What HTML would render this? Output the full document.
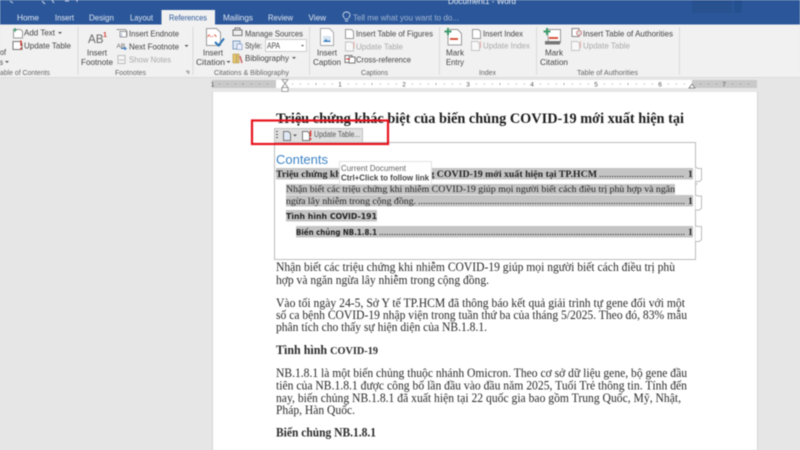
<!DOCTYPE html>
<html lang="vi">
<head>
<meta charset="utf-8">
<title>Document1 - Word</title>
<style>
html,body{margin:0;padding:0;width:800px;height:450px;overflow:hidden;background:#e6e6e6}
svg{display:block;position:absolute;left:0;top:0;filter:blur(.4px)}
.r{font-family:"Liberation Sans",sans-serif;font-size:8.6px;fill:#444}
.g{fill:#a9a9a9}
.l{font-size:7.6px;fill:#666;text-anchor:middle}
.t{font-family:"Liberation Sans",sans-serif;font-size:8.6px;fill:#fff;opacity:.85}
.b{font-family:"Liberation Serif",serif;font-size:12.3px;fill:#2a2a2a}
.bb{font-weight:bold}
.toc{font-family:"Liberation Serif",serif;font-size:9.5px;fill:#222}
.s{font-family:"DejaVu Sans",sans-serif;font-size:8px;font-weight:bold;fill:#222}
.i{fill:none;stroke:#777;stroke-width:1}
.n{font-family:"Liberation Sans",sans-serif;font-size:6.5px;fill:#555;text-anchor:middle}
</style>
</head>
<body>
<svg width="800" height="450" viewBox="0 0 800 450" xmlns="http://www.w3.org/2000/svg">
<rect width="800" height="450" fill="#e6e6e6"/>
<!-- title bar -->
<rect width="800" height="24.500" fill="#2b579a"/>
<rect x="692" y="0" width="40" height="13" fill="#28528f"/>
<rect x="734" y="0" width="8" height="13" fill="#25508f"/>
<text class="t" x="448" y="4" textLength="68" lengthAdjust="spacingAndGlyphs" style="opacity:.9">Document1 - Word</text>
<path d="M10 1l3 2M42 1l3 3M52 0l2 3M65 1l4 0M77 0l0 2" stroke="#cfd9ea" stroke-width="1" fill="none"/>
<!-- tabs -->
<rect x="161.500" y="10" width="53.500" height="15" fill="#f1f1f1"/>
<text class="t" x="17" y="20.500" textLength="22" lengthAdjust="spacingAndGlyphs">Home</text>
<text class="t" x="55" y="20.500" textLength="19" lengthAdjust="spacingAndGlyphs">Insert</text>
<text class="t" x="89" y="20.500" textLength="25" lengthAdjust="spacingAndGlyphs">Design</text>
<text class="t" x="130" y="20.500" textLength="23" lengthAdjust="spacingAndGlyphs">Layout</text>
<text class="r" x="169" y="20.500" textLength="38" lengthAdjust="spacingAndGlyphs" style="fill:#2b579a">References</text>
<text class="t" x="223" y="20.500" textLength="30" lengthAdjust="spacingAndGlyphs">Mailings</text>
<text class="t" x="268" y="20.500" textLength="25" lengthAdjust="spacingAndGlyphs">Review</text>
<text class="t" x="308.500" y="20.500" textLength="17.500" lengthAdjust="spacingAndGlyphs">View</text>
<path d="M345 21h3M344.500 19h4M344.500 18c-3-3-1-6 2-6s5 3 2 6" fill="none" stroke="#c9d5e8" stroke-width=".9"/>
<text class="t" x="353" y="20.500" textLength="106" lengthAdjust="spacingAndGlyphs" style="opacity:.55">Tell me what you want to do...</text>
<!-- ribbon -->
<rect y="24.500" width="800" height="53" fill="#f1f1f1"/>
<rect y="77" width="800" height="1" fill="#dcdcdc"/>
<g stroke="#dadada" stroke-width="1">
<path d="M78 27v48M193 27v48M309.500 27v48M439.500 27v48M536.500 27v48M679.500 27v48"/>
</g>
<!-- group labels -->
<g>
<text class="r l" x="25" y="75" textLength="50" lengthAdjust="spacingAndGlyphs">able of Contents</text>
<text class="r l" x="130.500" y="75" textLength="31" lengthAdjust="spacingAndGlyphs">Footnotes</text>
<text class="r l" x="251.500" y="75" textLength="75" lengthAdjust="spacingAndGlyphs">Citations &amp; Bibliography</text>
<text class="r l" x="374.500" y="75" textLength="27" lengthAdjust="spacingAndGlyphs">Captions</text>
<text class="r l" x="487.500" y="75" textLength="17" lengthAdjust="spacingAndGlyphs">Index</text>
<text class="r l" x="607.500" y="75" textLength="61" lengthAdjust="spacingAndGlyphs">Table of Authorities</text>
</g>
<path d="M186 71h3v3M188.500 73.500l-2-2" stroke="#888" fill="none" stroke-width=".7"/>

<!-- TOC group -->
<path d="M13.500 29.500h7l2 2v6.500h-9z" fill="#fff" stroke="#999"/>
<path d="M15 28v4M13 30h4" stroke="#3d9a6a"/>
<text class="r" x="24" y="35.500" textLength="31" lengthAdjust="spacingAndGlyphs">Add Text</text>
<path d="M58 32l2 2 2-2z" fill="#555"/>
<path d="M13 41.500h7l2 2v6h-9z" fill="#fff" stroke="#777"/>
<path d="M21 40.500v5.500M21 47.500v2" stroke="#d8342a" stroke-width="1.400"/>
<text class="r" x="24" y="48.500" textLength="47" lengthAdjust="spacingAndGlyphs">Update Table</text>
<text class="r" x="0" y="55" textLength="6" lengthAdjust="spacingAndGlyphs">of</text>
<text class="r" x="0" y="65" textLength="3" lengthAdjust="spacingAndGlyphs">s</text>
<path d="M5 61l2 2 2-2z" fill="#555"/>

<!-- Footnotes group -->
<text x="88" y="43" font-family="Liberation Sans,sans-serif" font-size="11.500" fill="#666" textLength="15.500" lengthAdjust="spacingAndGlyphs">AB</text>
<text x="103" y="37" font-family="Liberation Sans,sans-serif" font-size="7" font-weight="bold" fill="#d0473a">1</text>
<text class="r" x="87" y="55.500" textLength="20" lengthAdjust="spacingAndGlyphs">Insert</text>
<text class="r" x="81" y="65" textLength="32" lengthAdjust="spacingAndGlyphs">Footnote</text>
<path d="M116.500 29.500h9l1.500 2v5" fill="#e8e8e8" stroke="#999"/>
<rect x="120" y="31.500" width="6.500" height="5.500" fill="#fff" stroke="#777" stroke-width=".7"/>
<text x="121" y="36.500" font-family="Liberation Sans,sans-serif" font-size="5" fill="#2b579a">i</text>
<text class="r" x="129" y="36.500" textLength="50" lengthAdjust="spacingAndGlyphs">Insert Endnote</text>
<text x="116.500" y="48" font-family="Liberation Sans,sans-serif" font-size="6.500" fill="#666">AB</text>
<path d="M121 48.500h5l-1.500-1.500M126 48.500l-1.500 1.500" stroke="#3f7fc0" fill="none"/>
<text class="r" x="129" y="49.500" textLength="50" lengthAdjust="spacingAndGlyphs">Next Footnote</text>
<path d="M184.500 45l2 2 2-2z" fill="#555"/>
<rect x="118" y="55.500" width="7" height="8" fill="#f5f5f5" stroke="#bbb"/>
<path d="M119 60h5" stroke="#bbb"/>
<text class="r g" x="129" y="62.500" textLength="42" lengthAdjust="spacingAndGlyphs">Show Notes</text>

<!-- Citation -->
<path d="M206.500 28.500h10l4 4v13h-14z" fill="#fff" stroke="#999"/>
<path d="M208 37c0-2 1-2 2-2M214 35c1 0 2 0 2 2" stroke="#d8543f" fill="none"/>
<path d="M210 36.500h3" stroke="#d8543f" stroke-dasharray="1 1"/>
<path d="M215 42l3.500 3.500 5.500-7" stroke="#2b74b5" stroke-width="2" fill="none"/>
<text class="r" x="203" y="55.500" textLength="20" lengthAdjust="spacingAndGlyphs">Insert</text>
<text class="r" x="196" y="65" textLength="29" lengthAdjust="spacingAndGlyphs">Citation</text>
<path d="M226.500 61l2 2 2-2z" fill="#555"/>
<rect x="233" y="30" width="9" height="5.500" fill="#eee" stroke="#777"/><path d="M235 30v-2h5v2" class="i"/>
<text class="r" x="245" y="36.500" textLength="58" lengthAdjust="spacingAndGlyphs">Manage Sources</text>
<rect x="233" y="41" width="7" height="8" fill="#dfe8f3" stroke="#7f9cc0"/><rect x="237" y="44" width="5" height="5.500" fill="#eef" stroke="#7f9cc0" stroke-width=".7"/>
<text class="r" x="245" y="48.500" textLength="17" lengthAdjust="spacingAndGlyphs">Style:</text>
<rect x="265.500" y="39.500" width="41" height="12" fill="#fff" stroke="#ccc"/>
<text class="r" x="267" y="48.500" textLength="13" lengthAdjust="spacingAndGlyphs">APA</text>
<path d="M301 45l1.500 1.500 1.500-1.500z" fill="#444"/>
<path d="M233 54h3v9h-3zM237 54h2v9h-2z" fill="#e8c76f" stroke="#a98d3c" stroke-width=".6"/><path d="M240 56l2 7" stroke="#c66" stroke-width="1.500"/>
<text class="r" x="245" y="61" textLength="44" lengthAdjust="spacingAndGlyphs">Bibliography</text>
<path d="M292 57l2 2 2-2z" fill="#555"/>

<!-- Caption -->
<path d="M320.500 28.500h9l4 4v13h-13z" fill="#fff" stroke="#aaa"/>
<rect x="323" y="36" width="8" height="6" fill="#d8e4f0"/>
<path d="M323 42l3-3 2 2 1-1 2 2z" fill="#3f7fc0"/>
<text class="r" x="317" y="55.500" textLength="20" lengthAdjust="spacingAndGlyphs">Insert</text>
<text class="r" x="313" y="65" textLength="28" lengthAdjust="spacingAndGlyphs">Caption</text>
<path d="M345.500 29.500h6l2 2v7h-8z" fill="#fff" stroke="#999"/>
<text class="r" x="356" y="36.500" textLength="77" lengthAdjust="spacingAndGlyphs">Insert Table of Figures</text>
<path d="M345.500 42h6l2 2v7h-8z" fill="#f8f8f8" stroke="#c4c4c4"/><path d="M354 41.500v7" stroke="#e8b0aa"/>
<text class="r g" x="356" y="49.500" textLength="47" lengthAdjust="spacingAndGlyphs">Update Table</text>
<rect x="345" y="55.500" width="7" height="7" fill="#fff" stroke="#777"/><rect x="349" y="57" width="6" height="6" fill="#fff" stroke="#777"/>
<path d="M346 59h4" stroke="#c33"/>
<text class="r" x="356" y="62.500" textLength="55" lengthAdjust="spacingAndGlyphs">Cross-reference</text>

<!-- Mark Entry -->
<path d="M449.500 29.500h8l4 4v11.500h-13.500v-11" fill="#fff" stroke="#999"/>
<path d="M448 28v7M444.500 31.500h7" stroke="#3d9a6a" stroke-width="2"/>
<path d="M450 39h8" stroke="#d8543f" stroke-width="2"/>
<text class="r" x="446" y="55.500" textLength="18" lengthAdjust="spacingAndGlyphs">Mark</text>
<text class="r" x="446" y="65" textLength="18" lengthAdjust="spacingAndGlyphs">Entry</text>
<path d="M472.500 29.500h6l2 2v7h-8z" fill="#fff" stroke="#999"/>
<text class="r" x="483" y="36.500" textLength="40" lengthAdjust="spacingAndGlyphs">Insert Index</text>
<path d="M471.500 41.500h6l2 2v7h-8z" fill="#f8f8f8" stroke="#c4c4c4"/><path d="M480.500 41v7" stroke="#e8b0aa"/>
<text class="r g" x="483" y="48.500" textLength="47" lengthAdjust="spacingAndGlyphs">Update Index</text>

<!-- Mark Citation -->
<path d="M547.500 29.500h13v13h-12z" fill="#fff" stroke="#999"/>
<rect x="545" y="41" width="15" height="3.500" fill="#777"/>
<path d="M547 28v7M543.500 31.500h7" stroke="#3d9a6a" stroke-width="2"/>
<path d="M549 38h9" stroke="#d8543f" stroke-width="2"/>
<text class="r" x="545" y="55.500" textLength="18" lengthAdjust="spacingAndGlyphs">Mark</text>
<text class="r" x="540" y="65" textLength="28" lengthAdjust="spacingAndGlyphs">Citation</text>
<rect x="572" y="28.500" width="7" height="8" fill="#fff" stroke="#888"/><circle cx="579" cy="33" r="2.500" fill="#ddd" stroke="#c66" stroke-width=".7"/>
<text class="r" x="583" y="36.500" textLength="90" lengthAdjust="spacingAndGlyphs">Insert Table of Authorities</text>
<path d="M571.500 41.500h6l2 2v7h-8z" fill="#f8f8f8" stroke="#c4c4c4"/><path d="M580.500 41v7" stroke="#e8b0aa"/>
<text class="r g" x="583" y="48.500" textLength="47" lengthAdjust="spacingAndGlyphs">Update Table</text>

<!-- ruler -->
<rect x="212" y="80" width="545" height="8" fill="#c9c9c9"/>
<rect x="276" y="80" width="416" height="8" fill="#fff"/>
<path d="M219 84h1M227 84h1M235 84h1M243 83v2M251 84h1M259 84h1M267 84h1" stroke="#888" stroke-width=".7"/>
<path d="M292 84h1M300 84h1M308 84h1M316 83v2M324 84h1M332 84h1M348 84h1M356 84h1M364 84h1M372 83v2M380 84h1M388 84h1M396 84h1M412 84h1M420 84h1M428 84h1M436 83v2M444 84h1M452 84h1M460 84h1M476 84h1M484 84h1M492 84h1M500 83v2M508 84h1M516 84h1M524 84h1M540 84h1M548 84h1M556 84h1M564 83v2M572 84h1M580 84h1M588 84h1M604 84h1M612 84h1M620 84h1M628 83v2M636 84h1M644 84h1M652 84h1M668 84h1M676 84h1M684 84h1M700 84h1M708 84h1M716 84h1M732 84h1M740 84h1M748 84h1" stroke="#888" stroke-width=".7"/>
<g><text class="n" x="212.500" y="86.500">1</text><text class="n" x="340" y="86.500">1</text><text class="n" x="404" y="86.500">2</text><text class="n" x="468" y="86.500">3</text><text class="n" x="532" y="86.500">4</text><text class="n" x="596" y="86.500">5</text><text class="n" x="660" y="86.500">6</text><text class="n" x="724" y="86.500">7</text></g>
<path d="M282 79.500h6l-3 4 3 4h-6l3-4zM282 87.500h6v4h-6z" fill="#fff" stroke="#888" stroke-width=".8"/>
<path d="M689 88l3-4 3 4z" fill="#fff" stroke="#777" stroke-width=".8"/>

<!-- page -->
<rect x="212.500" y="92" width="545" height="358" fill="#fff"/>
<path d="M212.500 92v358M757.500 92v358" stroke="#d5d5d5"/>

<!-- title text -->
<text class="b bb" x="276" y="123" style="font-size:14.500px;fill:#1c1c1c" textLength="408" lengthAdjust="spacingAndGlyphs">Triệu chứng khác biệt của biến chủng COVID-19 mới xuất hiện tại</text>

<!-- TOC box -->
<rect x="274.500" y="142.500" width="421" height="117" fill="#fff" stroke="#bcbcbc"/>
<path d="M695.500 166.500l2 2h4v11l-2 2h-4" fill="#fff" stroke="#bcbcbc"/>
<path d="M695.500 184.500l2-1M695.500 194.500l2 1.500h4v12l-2 2h-4" fill="#fff" stroke="#bcbcbc"/>
<path d="M695.500 225.500l2 1h4v13l-2 2h-4" fill="#fff" stroke="#bcbcbc"/>
<text x="276" y="164" font-family="Liberation Sans,sans-serif" font-size="13" fill="#3c84c6" textLength="52" lengthAdjust="spacingAndGlyphs">Contents</text>
<g fill="#c4c4c4">
<rect x="276" y="168" width="417" height="11.500"/>
<rect x="286" y="184" width="389" height="10.500"/>
<rect x="286" y="195" width="407" height="11.500"/>
<rect x="286" y="210" width="91" height="11.500"/>
<rect x="296" y="226" width="397" height="11.500"/>
</g>
<text class="toc bb" x="276" y="177" textLength="321" lengthAdjust="spacingAndGlyphs">Triệu chứng khác biệt của biến chủng COVID-19 mới xuất hiện tại TP.HCM</text>
<text class="toc" x="599" y="177" textLength="85" lengthAdjust="spacing">..................................</text>
<text class="toc bb" x="688" y="177">1</text>
<text class="toc" x="286" y="192" textLength="389" lengthAdjust="spacingAndGlyphs">Nhận biết các triệu chứng khi nhiễm COVID-19 giúp mọi người biết cách điều trị phù hợp và ngăn</text>
<text class="toc" x="286" y="204" textLength="130" lengthAdjust="spacingAndGlyphs">ngừa lây nhiễm trong cộng đồng.</text>
<text class="toc" x="418" y="204" textLength="267" lengthAdjust="spacing">............................................................................................................</text>
<text class="toc bb" x="688" y="204">1</text>
<text class="s" x="286" y="219" textLength="91" lengthAdjust="spacingAndGlyphs">Tình hình COVID-191</text>
<text class="s" x="296" y="235" textLength="81" lengthAdjust="spacingAndGlyphs">Biến chủng NB.1.8.1</text>
<text class="toc" x="379" y="235" textLength="306" lengthAdjust="spacing">..............................................................................................................................</text>
<text class="toc bb" x="688" y="235">1</text>

<!-- tooltip -->
<rect x="339.500" y="161.500" width="92" height="23" fill="#fff" stroke="#e2e2e2"/>
<text x="341" y="171" font-family="Liberation Sans,sans-serif" font-size="8" fill="#666" textLength="65" lengthAdjust="spacingAndGlyphs">Current Document</text>
<text x="341" y="180.500" font-family="Liberation Sans,sans-serif" font-size="8" font-weight="bold" fill="#444" textLength="88" lengthAdjust="spacingAndGlyphs">Ctrl+Click to follow link</text>

<!-- toolbar -->
<rect x="274.500" y="128.500" width="88" height="14" fill="#e1e1e1" stroke="#c2c2c2"/>
<path d="M277 131v1M277 134v1M277 137v1" stroke="#333" stroke-width="1.500"/>
<path d="M283.500 131.500h5l2 2v7h-7z" fill="#dfe8f3" stroke="#777"/>
<path d="M293 134.500l2 2 2-2z" fill="#555"/>
<path d="M302.500 131.500h5l2 2v7h-7z" fill="#fff" stroke="#777"/>
<path d="M310.500 130.500v6M310.500 138v2" stroke="#e0342a" stroke-width="1.500"/>
<text x="314" y="137" font-family="Liberation Sans,sans-serif" font-size="8" fill="#555" textLength="46" lengthAdjust="spacingAndGlyphs">Update Table...</text>

<!-- red box -->
<rect x="252" y="120.500" width="136" height="23.500" fill="none" stroke="#e8141e" stroke-width="2.200"/>

<!-- body -->
<g>
<text class="b" x="276" y="271" textLength="399" lengthAdjust="spacingAndGlyphs">Nhận biết các triệu chứng khi nhiễm COVID-19 giúp mọi người biết cách điều trị phù</text>
<text class="b" x="276" y="284" textLength="213" lengthAdjust="spacingAndGlyphs">hợp và ngăn ngừa lây nhiễm trong cộng đồng.</text>
<text class="b" x="276" y="307" textLength="409" lengthAdjust="spacingAndGlyphs">Vào tối ngày 24-5, Sở Y tế TP.HCM đã thông báo kết quả giải trình tự gene đối với một</text>
<text class="b" x="276" y="319" textLength="411" lengthAdjust="spacingAndGlyphs">số ca bệnh COVID-19 nhập viện trong tuần thứ ba của tháng 5/2025. Theo đó, 83% mẫu</text>
<text class="b" x="276" y="331" textLength="211" lengthAdjust="spacingAndGlyphs">phân tích cho thấy sự hiện diện của NB.1.8.1.</text>
<text class="b bb" x="276" y="354" textLength="102" lengthAdjust="spacingAndGlyphs">Tình hình <tspan style="font-size:10.500px">COVID-19</tspan></text>
<text class="b" x="276" y="377" textLength="411" lengthAdjust="spacingAndGlyphs">NB.1.8.1 là một biến chủng thuộc nhánh Omicron. Theo cơ sở dữ liệu gene, bộ gene đầu</text>
<text class="b" x="276" y="389.500" textLength="411" lengthAdjust="spacingAndGlyphs">tiên của NB.1.8.1 được công bố lần đầu vào đầu năm 2025, Tuổi Trẻ thông tin. Tính đến</text>
<text class="b" x="276" y="402" textLength="405" lengthAdjust="spacingAndGlyphs">nay, biến chủng NB.1.8.1 đã xuất hiện tại 22 quốc gia bao gồm Trung Quốc, Mỹ, Nhật,</text>
<text class="b" x="276" y="414" textLength="79" lengthAdjust="spacingAndGlyphs">Pháp, Hàn Quốc.</text>
<text class="b bb" x="276" y="436.500" textLength="100" lengthAdjust="spacingAndGlyphs">Biến chủng NB.1.8.1</text>
</g>
</svg>
</body>
</html>
